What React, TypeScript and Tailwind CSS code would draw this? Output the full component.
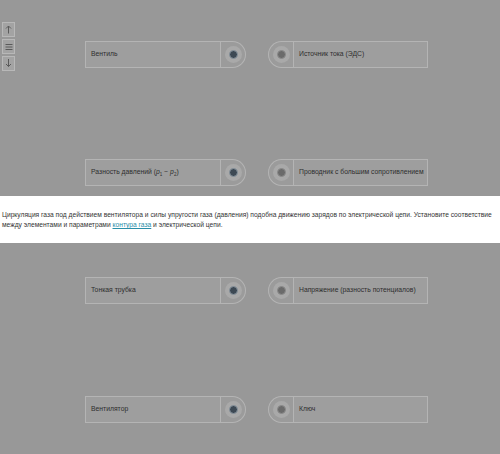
import React from "react";

const font = { fontFamily: '"Liberation Sans", Arial, sans-serif' };

function LeftCard({ children }: { children: React.ReactNode }) {
  return (
    <div className="flex h-[27px] w-[161px]">
      <div className="flex w-[136px] items-center border border-[#b4b4b4] bg-[#9e9e9e] pl-[5px] text-[6.8px] text-[#2e2e2e] whitespace-nowrap">
        {children}
      </div>
      <div className="flex w-[25px] items-center justify-center rounded-r-full border border-l-0 border-[#b4b4b4] bg-[#9b9b9b]">
        <div className="flex h-[17px] w-[17px] items-center justify-center rounded-full bg-[#a9a9a9]">
          <div className="h-[9px] w-[9px] rounded-full border border-[#8a96a0] bg-[#3d4954]" />
        </div>
      </div>
    </div>
  );
}

function RightCard({ children }: { children: React.ReactNode }) {
  return (
    <div className="flex h-[27px] w-[160px]">
      <div className="flex w-[25px] items-center justify-center rounded-l-full border border-r-0 border-[#b4b4b4] bg-[#9b9b9b]">
        <div className="flex h-[17px] w-[17px] items-center justify-center rounded-full bg-[#a9a9a9]">
          <div className="h-[9px] w-[9px] rounded-full border border-[#8c8c8c] bg-[#6b6b6b]" />
        </div>
      </div>
      <div className="flex w-[135px] items-center border border-[#b4b4b4] bg-[#9e9e9e] pl-[5px] text-[6.8px] text-[#2e2e2e] whitespace-nowrap">
        {children}
      </div>
    </div>
  );
}

function Row({ l, r }: { l: React.ReactNode; r: React.ReactNode }) {
  return (
    <div className="flex gap-[22px] pl-[85px]">
      <LeftCard>{l}</LeftCard>
      <RightCard>{r}</RightCard>
    </div>
  );
}

function NavBtn({ children }: { children: React.ReactNode }) {
  return (
    <div className="flex h-[15px] w-[13px] items-center justify-center border border-[#b8b8b8] bg-[#a3a3a3] text-[#555]">
      {children}
    </div>
  );
}

export default function App() {
  return (
    <div className="relative h-[454px] w-[500px] overflow-hidden bg-[#989898]" style={font}>
      <div className="absolute left-[2px] top-[22px] flex flex-col gap-[2px]">
        <NavBtn>
          <svg width="7" height="9" viewBox="0 0 7 9" fill="none" stroke="#5a5a5a" strokeWidth="1">
            <path d="M3.5 8.5V1M1 3.5L3.5 1L6 3.5" />
          </svg>
        </NavBtn>
        <NavBtn>
          <svg width="8" height="8" viewBox="0 0 8 8" fill="none" stroke="#5a5a5a" strokeWidth="1">
            <path d="M0.5 1.5H7.5M0.5 4H7.5M0.5 6.5H7.5" />
          </svg>
        </NavBtn>
        <NavBtn>
          <svg width="7" height="9" viewBox="0 0 7 9" fill="none" stroke="#5a5a5a" strokeWidth="1">
            <path d="M3.5 0V7.5M1 5L3.5 7.5L6 5" />
          </svg>
        </NavBtn>
      </div>

      <div className="flex flex-col pt-[41px]">
        <Row l="Вентиль" r="Источник тока (ЭДС)" />
        <div className="h-[91px]" />
        <Row
          l={
            <span>
              Разность давлений (<i>p</i>
              <sub className="text-[4.5px]">1</sub> − <i>p</i>
              <sub className="text-[4.5px]">2</sub>)
            </span>
          }
          r="Проводник с большим сопротивлением"
        />
        <div className="mt-[10px] h-[47px] w-full bg-white px-[2px] pt-[14px] text-[6.68px] leading-[10px] text-[#333] whitespace-nowrap">
          <div>
            Циркуляция газа под действием вентилятора и силы упругости газа (давления) подобна движению зарядов по
            электрической цепи. Установите соответствие
          </div>
          <div>
            между элементами и параметрами <span className="text-[#2a8ea8] underline">контура газа</span> и
            электрической цепи.
          </div>
        </div>
        <div className="h-[34px]" />
        <Row l="Тонкая трубка" r="Напряжение (разность потенциалов)" />
        <div className="h-[92px]" />
        <Row l="Вентилятор" r="Ключ" />
      </div>
    </div>
  );
}
